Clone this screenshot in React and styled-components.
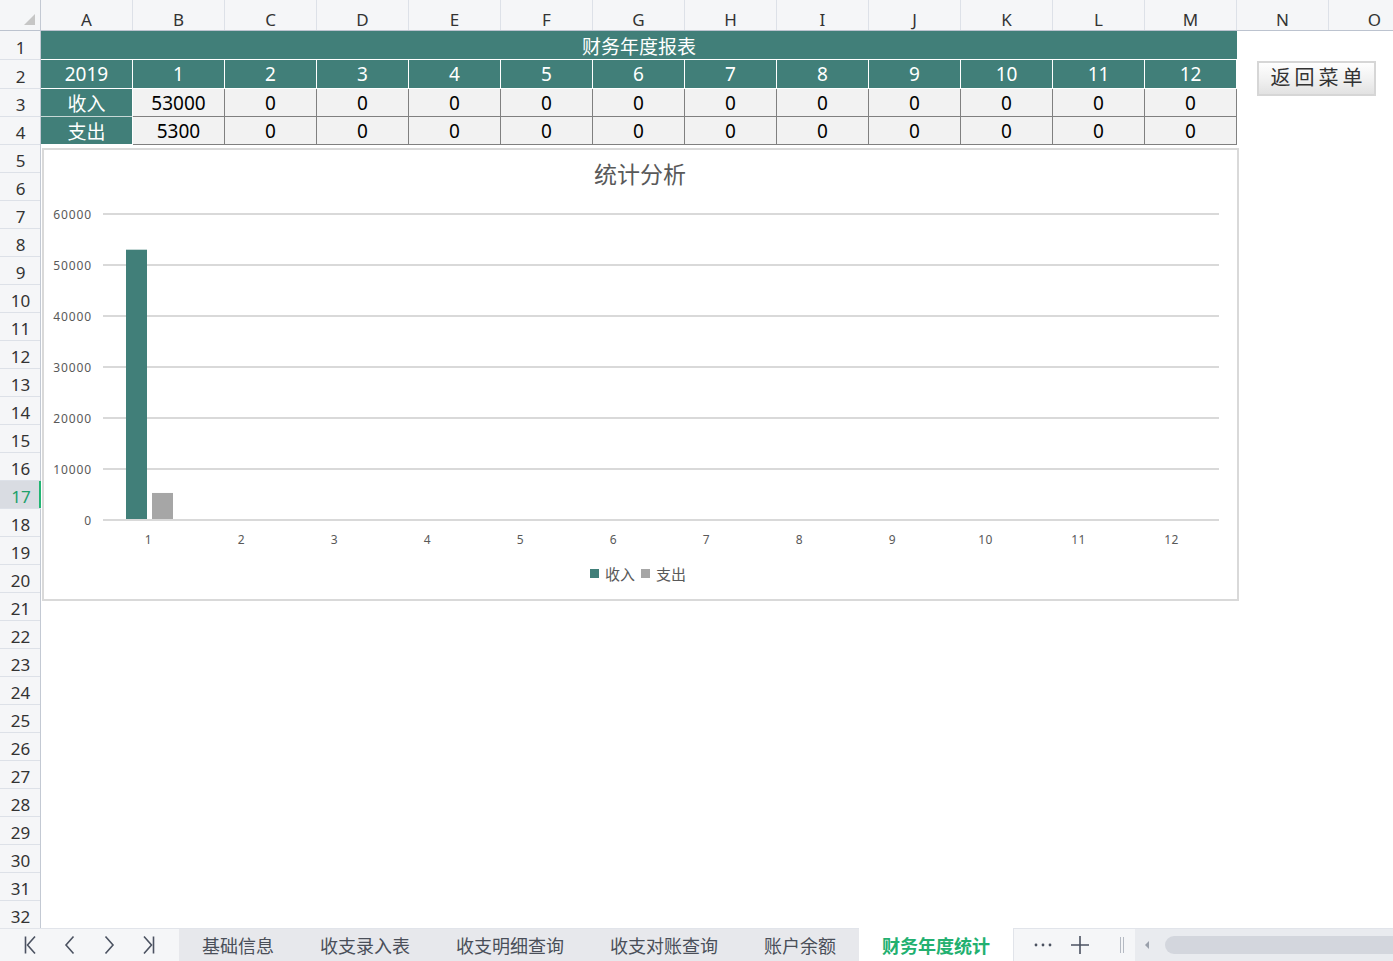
import React from 'react';
import styled, { createGlobalStyle } from 'styled-components';

const GlobalStyle = createGlobalStyle`
  html, body {
    margin: 0;
    padding: 0;
    background: #ffffff;
    overflow: hidden;
  }
  * {
    box-sizing: border-box;
  }
  body {
    font-family: "Noto Sans", "Noto Sans CJK SC", sans-serif;
    color: #333333;
  }
`;

const TEAL = '#417f79';
const GRAY_BAR = '#a6a6a6';
const COL_W = 92;
const COLUMNS = ['A', 'B', 'C', 'D', 'E', 'F', 'G', 'H', 'I', 'J', 'K', 'L', 'M', 'N', 'O'];
const ROW_HEIGHTS = [29, 29, 28, 28, ...Array(28).fill(28)];
const ACTIVE_ROW = 17;

const months = [1, 2, 3, 4, 5, 6, 7, 8, 9, 10, 11, 12];
const income = [53000, 0, 0, 0, 0, 0, 0, 0, 0, 0, 0, 0];
const expense = [5300, 0, 0, 0, 0, 0, 0, 0, 0, 0, 0, 0];

const tabs = ['基础信息', '收支录入表', '收支明细查询', '收支对账查询', '账户余额', '财务年度统计'];
const ACTIVE_TAB = '财务年度统计';

const Page = styled.div`
  width: 1393px;
  height: 961px;
  display: flex;
  flex-direction: column;
  overflow: hidden;
`;

const Sheet = styled.div`
  flex: 1;
  display: flex;
  flex-direction: column;
  overflow: hidden;
`;

const HeaderRow = styled.div`
  display: flex;
  height: 31px;
  flex-shrink: 0;
  background: #f5f6f8;
  border-bottom: 1px solid #bcc3cf;
`;

const Corner = styled.div`
  position: relative;
  width: 41px;
  flex-shrink: 0;
  border-right: 1px solid #c3c9d3;

  &::after {
    content: '';
    position: absolute;
    right: 5px;
    bottom: 5px;
    width: 0;
    height: 0;
    border-left: 11px solid transparent;
    border-bottom: 11px solid #c6c6c6;
  }
`;

const ColHead = styled.div`
  width: ${COL_W}px;
  flex-shrink: 0;
  display: flex;
  align-items: center;
  justify-content: center;
  font-size: 17px;
  color: #333333;
  padding-top: 8px;
  border-right: 1px solid #dde1e8;
`;

const Body = styled.div`
  flex: 1;
  display: flex;
  overflow: hidden;
`;

const RowHeads = styled.div`
  width: 41px;
  flex-shrink: 0;
  display: flex;
  flex-direction: column;
  background: #f5f6f8;
  border-right: 1px solid #c3c9d3;
`;

const RowHead = styled.div`
  height: ${({ h }) => h}px;
  flex-shrink: 0;
  display: flex;
  align-items: center;
  justify-content: center;
  font-size: 17px;
  padding-top: 4px;
  padding-left: 1px;
  border-bottom: 1px solid #dde1e8;
  color: ${({ active }) => (active ? '#21a06b' : '#333333')};
  background: ${({ active }) => (active ? '#d9dce2' : 'transparent')};
  box-shadow: ${({ active }) => (active ? 'inset -2px 0 0 #22b573' : 'none')};
  margin-right: ${({ active }) => (active ? '-1px' : '0')};
`;

const Cells = styled.div`
  position: relative;
  flex: 1;
`;

const ReportGrid = styled.div`
  display: grid;
  grid-template-columns: repeat(13, ${COL_W}px);
  grid-template-rows: 29px 29px 28px 28px;
`;

const TitleCell = styled.div`
  grid-column: 1 / span 13;
  background: ${TEAL};
  color: #ffffff;
  font-size: 19px;
  font-family: "Noto Sans CJK SC", sans-serif;
  display: flex;
  align-items: center;
  justify-content: center;
  border-bottom: 1px solid #ffffff;
`;

const HeadCell = styled.div`
  background: ${TEAL};
  color: #ffffff;
  font-size: 19px;
  display: flex;
  align-items: center;
  justify-content: center;
  border-right: 1px solid #ffffff;
  border-bottom: 1px solid ${({ light }) => (light ? '#c7d8d6' : '#ffffff')};
  &:last-child {
    border-right: none;
  }
`;

const ValueCell = styled.div`
  background: #f2f2f2;
  color: #000000;
  font-size: 19px;
  display: flex;
  align-items: center;
  justify-content: center;
  border-right: 1px solid #808080;
  border-bottom: 1px solid #808080;
`;

const MenuButton = styled.button`
  position: absolute;
  left: 1216px;
  top: 30px;
  width: 119px;
  height: 35px;
  border: 2px solid #d6d6d6;
  background: linear-gradient(#fefefe, #f2f2f2 50%, #e2e2e2);
  font-family: "Noto Sans CJK SC", sans-serif;
  font-size: 20px;
  letter-spacing: 4px;
  color: #333333;
  padding: 0 0 4px 4px;
  display: flex;
  align-items: center;
  justify-content: center;
  cursor: pointer;
`;

const Chart = styled.div`
  position: absolute;
  left: 1px;
  top: 117px;
  width: 1197px;
  height: 453px;
  background: #ffffff;
  border: 2px solid #d9d9d9;
  display: flex;
  flex-direction: column;
  align-items: stretch;
  padding-top: 8px;
`;

const ChartTitle = styled.div`
  height: 32px;
  line-height: 30px;
  text-align: center;
  font-size: 23px;
  color: #595959;
  font-family: "Noto Sans CJK SC", sans-serif;
  padding-right: 1px;
`;

const PlotSvg = styled.svg`
  display: block;
  width: 1193px;
  height: 360px;
`;

const Legend = styled.div`
  margin-top: 13px;
  height: 20px;
  display: flex;
  align-items: center;
  justify-content: center;
  gap: 6px;
  font-size: 15px;
  color: #595959;
  font-family: "Noto Sans CJK SC", sans-serif;
  padding-right: 5px;
`;

const LegendItem = styled.div`
  display: flex;
  align-items: center;
  gap: 6px;
`;

const Swatch = styled.span`
  width: 9px;
  height: 9px;
  background: ${({ color }) => color};
`;

const TabBar = styled.div`
  height: 33px;
  flex-shrink: 0;
  display: flex;
  border-top: 1px solid #e1e4ea;
  background: #f5f6f8;
`;

const NavArea = styled.div`
  width: 179px;
  flex-shrink: 0;
  display: flex;
  align-items: center;
  padding-left: 11px;
`;

const NavButton = styled.div`
  width: 39px;
  height: 32px;
  display: flex;
  align-items: center;
  justify-content: center;
`;

const TabList = styled.div`
  display: flex;
  background: #e7e8ec;
`;

const Tab = styled.div`
  padding: 0 23px;
  display: flex;
  align-items: center;
  font-family: "Noto Sans CJK SC", sans-serif;
  font-size: 18px;
  white-space: nowrap;
  color: ${({ active }) => (active ? '#22b070' : '#4a4f59')};
  font-weight: ${({ active }) => (active ? 700 : 400)};
  background: ${({ active }) => (active ? '#ffffff' : 'transparent')};
  margin-top: ${({ active }) => (active ? '-1px' : '0')};
  border-right: ${({ active }) => (active ? '1px solid #e1e4ea' : 'none')};
`;

const Tools = styled.div`
  flex: 1;
  display: flex;
  align-items: center;
  padding-left: 19px;
`;

const ToolIcon = styled.div`
  width: ${({ w }) => w}px;
  height: 32px;
  margin-left: ${({ gap }) => gap || 0}px;
  display: flex;
  align-items: center;
  justify-content: center;
  flex-shrink: 0;
`;

const ScrollTrack = styled.div`
  flex: 1;
  height: 100%;
  margin-left: 8px;
  background: #e9ebef;
  display: flex;
  align-items: center;
  padding-left: 10px;
`;

const ScrollArrow = styled.span`
  width: 0;
  height: 0;
  border-top: 4px solid transparent;
  border-bottom: 4px solid transparent;
  border-right: 4px solid #9aa0ab;
  margin-right: 16px;
`;

const ScrollThumb = styled.div`
  flex: 1;
  height: 18px;
  border-radius: 9px 0 0 9px;
  background: #d3d6dd;
`;

const stroke = '#4b5261';

const NavIcon = ({ kind }) => (
  <svg width="20" height="20" viewBox="0 0 20 20" fill="none" stroke={stroke} strokeWidth="1.6">
    {kind === 'first' && (
      <>
        <path d="M4.5 1.5v17" />
        <path d="M14 1.5L6.5 10L14 18.5" />
      </>
    )}
    {kind === 'prev' && <path d="M13.5 1.5L6 10L13.5 18.5" />}
    {kind === 'next' && <path d="M6.5 1.5L14 10L6.5 18.5" />}
    {kind === 'last' && (
      <>
        <path d="M6 1.5L13.5 10L6 18.5" />
        <path d="M15.5 1.5v17" />
      </>
    )}
  </svg>
);

const PLOT = { left: 59, right: 1175, zero: 330, step: 51 };
const ticks = [0, 10000, 20000, 30000, 40000, 50000, 60000];

const BarChart = () => {
  const catW = (PLOT.right - PLOT.left) / months.length;
  const yOf = (v) => PLOT.zero - (v / 10000) * PLOT.step;
  return (
    <PlotSvg viewBox="0 0 1193 360">
      {ticks.map((t) => (
        <g key={t}>
          <line x1={PLOT.left} x2={PLOT.right} y1={yOf(t)} y2={yOf(t)} stroke="#d9d9d9" strokeWidth="2" />
          <text
            x="48"
            y={yOf(t) + 2}
            textAnchor="end"
            dominantBaseline="middle"
            fontSize="12"
            letterSpacing="0.9"
            fill="#595959"
            fontFamily="Noto Sans, sans-serif"
          >
            {t}
          </text>
        </g>
      ))}
      {months.map((m, i) => {
        const c = PLOT.left + catW * (i + 0.5);
        return (
          <g key={m}>
            {income[i] > 0 && (
              <rect x={c - 23.5} y={yOf(income[i])} width="21" height={PLOT.zero - yOf(income[i]) - 1} fill={TEAL} />
            )}
            {expense[i] > 0 && (
              <rect x={c + 2.5} y={yOf(expense[i])} width="21" height={PLOT.zero - yOf(expense[i]) - 1} fill={GRAY_BAR} />
            )}
            <text
              x={c - 1}
              y="351"
              textAnchor="middle"
              dominantBaseline="middle"
              fontSize="12"
              letterSpacing="0.5"
              fill="#595959"
              fontFamily="Noto Sans, sans-serif"
            >
              {m}
            </text>
          </g>
        );
      })}
    </PlotSvg>
  );
};

const App = () => {
  return (
    <>
      <GlobalStyle />
      <Page>
        <Sheet>
          <HeaderRow>
            <Corner />
            {COLUMNS.map((c) => (
              <ColHead key={c}>{c}</ColHead>
            ))}
          </HeaderRow>
          <Body>
            <RowHeads>
              {ROW_HEIGHTS.map((h, i) => (
                <RowHead key={i} h={h} active={i + 1 === ACTIVE_ROW}>
                  {i + 1}
                </RowHead>
              ))}
            </RowHeads>
            <Cells>
              <ReportGrid>
                <TitleCell>财务年度报表</TitleCell>
                <HeadCell>2019</HeadCell>
                {months.map((m) => (
                  <HeadCell key={m}>{m}</HeadCell>
                ))}
                <HeadCell light>收入</HeadCell>
                {income.map((v, i) => (
                  <ValueCell key={i}>{v}</ValueCell>
                ))}
                <HeadCell>支出</HeadCell>
                {expense.map((v, i) => (
                  <ValueCell key={i}>{v}</ValueCell>
                ))}
              </ReportGrid>

              <MenuButton>返回菜单</MenuButton>

              <Chart>
                <ChartTitle>统计分析</ChartTitle>
                <BarChart />
                <Legend>
                  <LegendItem>
                    <Swatch color={TEAL} />
                    收入
                  </LegendItem>
                  <LegendItem>
                    <Swatch color={GRAY_BAR} />
                    支出
                  </LegendItem>
                </Legend>
              </Chart>
            </Cells>
          </Body>
        </Sheet>

        <TabBar>
          <NavArea>
            <NavButton><NavIcon kind="first" /></NavButton>
            <NavButton><NavIcon kind="prev" /></NavButton>
            <NavButton><NavIcon kind="next" /></NavButton>
            <NavButton><NavIcon kind="last" /></NavButton>
          </NavArea>
          <TabList>
            {tabs.map((t) => (
              <Tab key={t} active={t === ACTIVE_TAB}>{t}</Tab>
            ))}
          </TabList>
          <Tools>
            <ToolIcon w={20}>
              <svg width="18" height="4" viewBox="0 0 18 4" fill="#4b5261">
                <circle cx="2" cy="2" r="1.4" />
                <circle cx="9" cy="2" r="1.4" />
                <circle cx="16" cy="2" r="1.4" />
              </svg>
            </ToolIcon>
            <ToolIcon w={54}>
              <svg width="20" height="20" viewBox="0 0 20 20" stroke="#4b5261" strokeWidth="1.6">
                <path d="M10 1v18M1 10h18" />
              </svg>
            </ToolIcon>
            <ToolIcon w={10} gap={10}>
              <svg width="6" height="16" viewBox="0 0 6 16" stroke="#b5bac3" strokeWidth="1">
                <path d="M1.5 0v16M4.5 0v16" />
              </svg>
            </ToolIcon>
            <ScrollTrack>
              <ScrollArrow />
              <ScrollThumb />
            </ScrollTrack>
          </Tools>
        </TabBar>
      </Page>
    </>
  );
};

export default App;
